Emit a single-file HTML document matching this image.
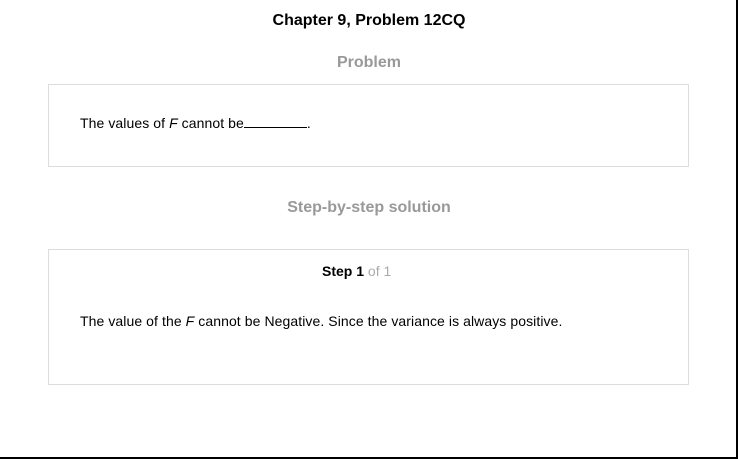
<!DOCTYPE html>
<html><head><meta charset="utf-8"><style>
html,body{margin:0;padding:0;background:#fff;}
body{width:738px;height:459px;position:relative;overflow:hidden;font-family:"Liberation Sans",Arial,sans-serif;color:#000;}
.frame{position:absolute;left:0;top:0;width:736px;height:457px;border-right:2px solid #000;border-bottom:2px solid #000;}
.t{position:absolute;left:0;width:738px;text-align:center;white-space:nowrap;}
.box{position:absolute;left:48px;width:641px;border:1px solid #ddd;box-sizing:border-box;}
.p{position:absolute;left:80px;font-size:14px;white-space:nowrap;letter-spacing:0.08px;}
.u{display:inline-block;width:63px;border-bottom:1px solid #000;height:11px;}
</style></head><body>
<div class="frame"></div>
<div class="t" style="top:12px;font-size:16px;font-weight:bold;">Chapter 9, Problem 12CQ</div>
<div class="t" style="top:54px;font-size:16px;font-weight:bold;color:#999;">Problem</div>
<div class="box" style="top:84px;height:83px;"></div>
<div class="p" style="top:115px;">The values of <i>F</i> cannot be<span class="u"></span>.</div>
<div class="t" style="top:199px;font-size:16px;font-weight:bold;color:#999;">Step-by-step solution</div>
<div class="box" style="top:249px;height:136px;"></div>
<div style="position:absolute;left:322px;top:263px;font-size:14px;white-space:nowrap;"><b>Step 1</b> <span style="color:#aaa;">of 1</span></div>
<div class="p" style="top:313px;">The value of the <i>F</i> cannot be Negative. Since the variance is always positive.</div>
</body></html>
